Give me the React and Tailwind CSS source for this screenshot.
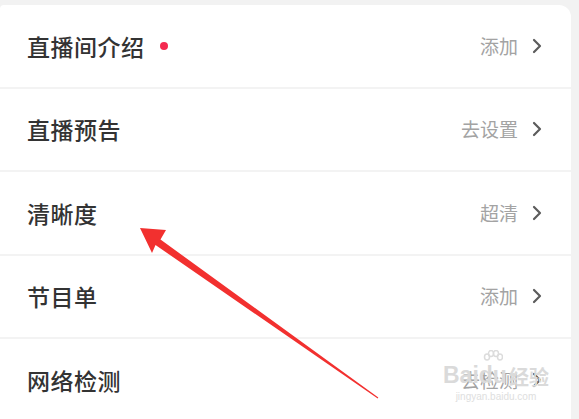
const rows = [
  { label: '直播间介绍', value: '添加', dot: true },
  { label: '直播预告', value: '去设置' },
  { label: '清晰度', value: '超清' },
  { label: '节目单', value: '添加' },
  { label: '网络检测', value: '去检测' },
];

const Chevron = () => (
  <svg width="10" height="16" viewBox="0 0 10 16" className="shrink-0">
    <path d="M2 2l6 6-6 6" fill="none" stroke="#5c5c5c" strokeWidth="2.2" strokeLinecap="round" strokeLinejoin="round" />
  </svg>
);

export default function App() {
  return (
    <div className="relative w-[579px] h-[419px] overflow-hidden bg-[#f2f2f2] pt-[5px] font-['Noto_Sans_CJK_SC','Noto_Sans',sans-serif]">
      <div className="w-[571px] h-[430px] bg-white rounded-tr-[12px] rounded-tl-[4px]">
        {rows.map((r) => (
          <div key={r.label} className="h-[83.5px] flex items-center pl-[27px] pr-[29px] border-b-2 border-[#f3f3f3]">
            <span className="text-[23px] font-medium text-[#333] tracking-[0.5px]">{r.label}</span>
            {r.dot && <span className="ml-[15px] w-[8px] h-[8px] rounded-full bg-[#f42a50]" />}
            <span className="ml-auto text-[19px] text-[#a3a3a3] mr-[14px]">{r.value}</span>
            <Chevron />
          </div>
        ))}
      </div>

      {/* red annotation arrow */}
      <svg className="absolute left-0 top-0" width="579" height="419" viewBox="0 0 579 419">
        <polygon
          points="140,228 166,230 160.5,239.5 378.3,397.6 377.7,398.4 155.5,245 152,253"
          fill="#f2302f"
        />
      </svg>

      {/* watermark */}
      <div className="absolute left-[443px] top-[364px] flex flex-col items-center text-[#dadada] leading-none">
        <div className="flex items-end font-['Liberation_Sans',sans-serif] text-[23px] font-bold">
          <span>Bai</span>
          <span className="relative">
            <svg className="absolute left-[4px] -top-[14px]" width="20" height="16" viewBox="0 0 20 16">
              <g fill="none" stroke="#dcdcdc" strokeWidth="1.5">
                <ellipse cx="4" cy="7" rx="2.5" ry="3" />
                <ellipse cx="8" cy="3.5" rx="2.5" ry="3" />
                <ellipse cx="13" cy="3.5" rx="2.5" ry="3" />
                <ellipse cx="17" cy="7" rx="2.5" ry="3" />
              </g>
            </svg>
            du
          </span>
          <span className="ml-[2px] text-[20px] font-['Noto_Sans_CJK_SC',sans-serif]">经验</span>
        </div>
        <span className="mt-[5px] text-[10px] font-['Liberation_Sans',sans-serif] text-[#dedede]">jingyan.baidu.com</span>
      </div>
    </div>
  );
}
